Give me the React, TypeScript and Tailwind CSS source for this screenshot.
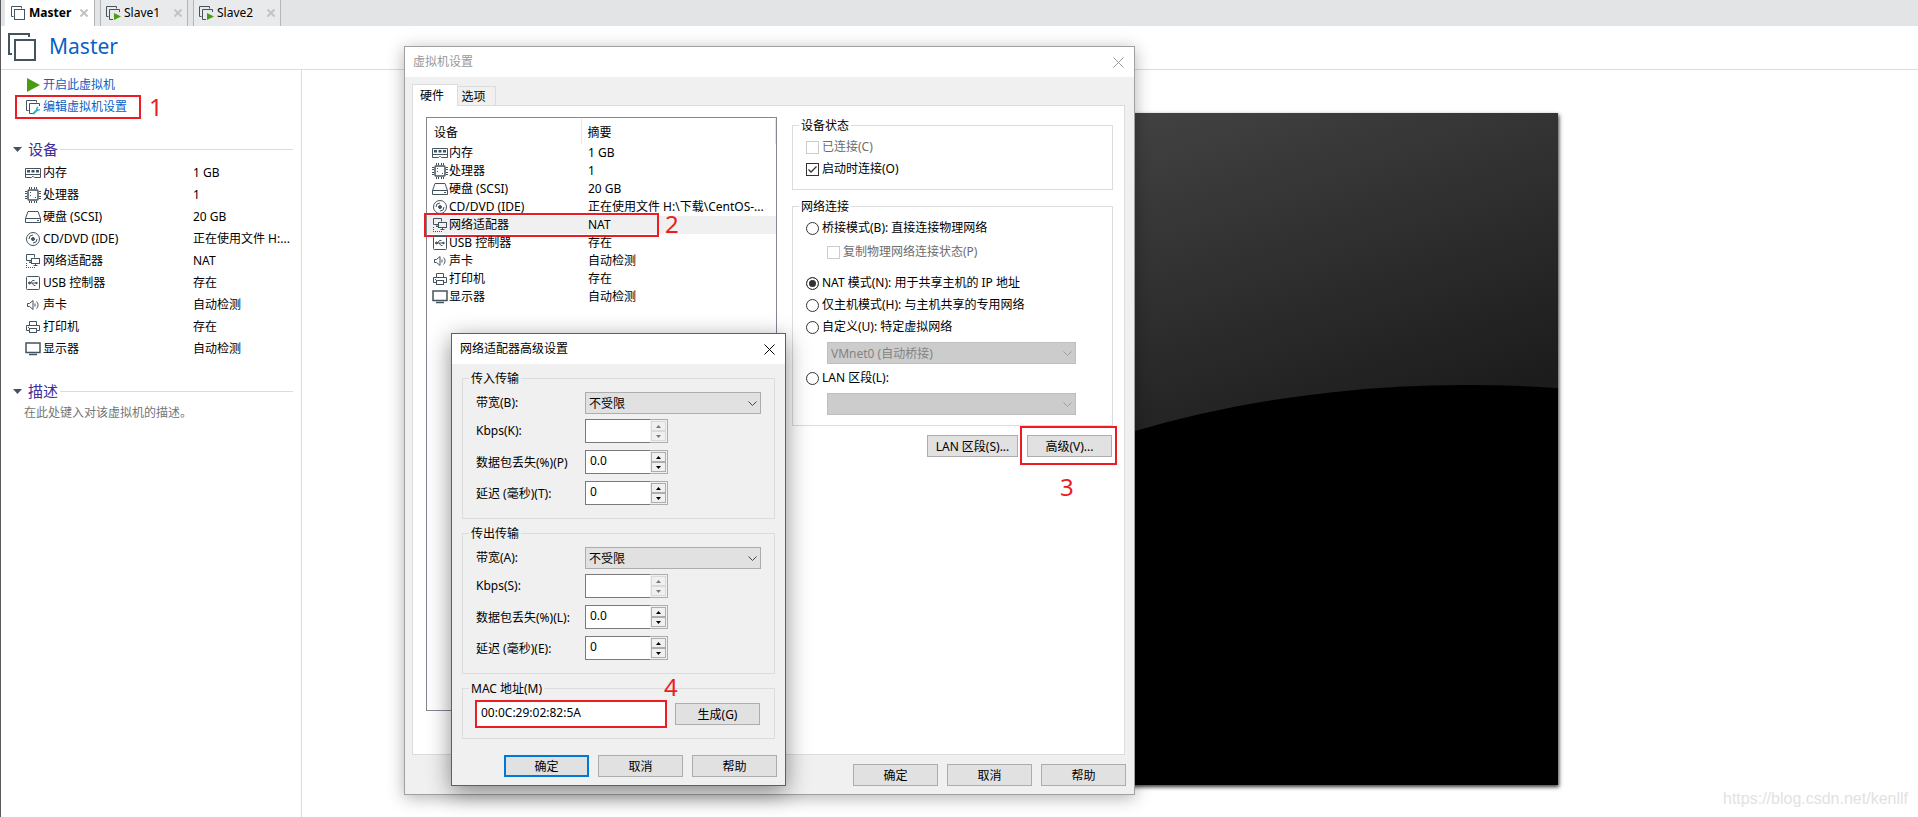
import React, { useState } from 'react';

type IconName = 'memory' | 'cpu' | 'disk' | 'cd' | 'network' | 'usb' | 'sound' | 'printer' | 'display';

interface Device {
  icon: IconName;
  name: string;
  summary: string;
  shortSummary?: string;
}

const devices: Device[] = [
  { icon: 'memory', name: '内存', summary: '1 GB' },
  { icon: 'cpu', name: '处理器', summary: '1' },
  { icon: 'disk', name: '硬盘 (SCSI)', summary: '20 GB' },
  { icon: 'cd', name: 'CD/DVD (IDE)', summary: '正在使用文件 H:\\下载\\CentOS-...', shortSummary: '正在使用文件 H:...' },
  { icon: 'network', name: '网络适配器', summary: 'NAT' },
  { icon: 'usb', name: 'USB 控制器', summary: '存在' },
  { icon: 'sound', name: '声卡', summary: '自动检测' },
  { icon: 'printer', name: '打印机', summary: '存在' },
  { icon: 'display', name: '显示器', summary: '自动检测' },
];

const iconShapes: Record<IconName, React.ReactNode> = {
  memory: (
    <>
      <path d="M.5 3.5h15v9H9.5l-1-1h-1l-1 1h-6z" />
      <path d="M.5 9.5h15" />
      <path d="M2 5h3v2.500H2zM6.500 5h3v2.500h-3zM11 5h3v2.500h-3z" fill="#44545f" stroke="none" />
    </>
  ),
  cpu: (
    <>
      <rect x="3" y="3" width="10" height="10" rx="1" strokeWidth="1.5" />
      <path d="M4.5 0v2M6.5 0v2M9.5 0v2M11.5 0v2M4.5 14v2M6.5 14v2M9.5 14v2M11.5 14v2M0 4.5h2M0 6.5h2M0 9.5h2M0 11.5h2M14 4.5h2M14 6.5h2M14 9.5h2M14 11.5h2" />
      <path d="M5 5.5h1M10 10.5h1M5 8.5h1" />
    </>
  ),
  disk: (
    <>
      <path d="M3 2.5h10l2.5 7H.5z" />
      <path d="M.5 9.5h15v4H.5z" />
      <path d="M12 11.5h2" />
    </>
  ),
  cd: (
    <>
      <circle cx="8" cy="8" r="6.5" />
      <circle cx="8" cy="8" r="1.5" fill="#44545f" />
      <path d="M4 8a4 4 0 0 1 4-4M12 8a4 4 0 0 1-4 4" />
    </>
  ),
  network: (
    <>
      <path d="M6 7.5H1.5v-6h8v3M4 9.5h2M5 7.5v2" />
      <rect x="6.5" y="5.5" width="8" height="5" />
      <path d="M10.5 10.5v2M8.5 12.5h4" />
      <path d="M1.5 10v5M1 14.5h10" strokeDasharray="1 1" />
    </>
  ),
  usb: (
    <>
      <rect x="1.5" y="1.5" width="13" height="13" rx="1" />
      <path d="M4 8h8M5.5 8l2-2.5h2M7 8l2 2.5h1.5" />
      <circle cx="4.5" cy="8" r="1" fill="#44545f" />
      <path d="M11 7l1.5 1-1.5 1z" fill="#44545f" />
    </>
  ),
  sound: (
    <>
      <path d="M2.5 6.5h2l3.5-3v9l-3.5-3h-2z" />
      <path d="M10 6.5v3M11.5 4.5c2 2 2 5 0 7" />
    </>
  ),
  printer: (
    <>
      <path d="M4.5 6V2.5h7V6M4.5 11.5h-3v-5h13v5h-3" />
      <rect x="4.5" y="9.5" width="7" height="4" />
      <path d="M3 8.5h1" />
    </>
  ),
  display: (
    <>
      <path d="M1 2h14v9.5H1z" strokeWidth="1.5" />
      <path d="M4 13.5h8" strokeWidth="1.5" />
    </>
  ),
};

const DeviceIcon = ({ name }: { name: IconName }) => (
  <svg viewBox="0 0 16 16" className="h-4 w-4 shrink-0" fill="none" stroke="#44545f" strokeWidth="1" aria-hidden="true">
    {iconShapes[name]}
  </svg>
);

const VmIcon = ({ badge }: { badge?: 'play' | 'wrench' }) => (
  <svg viewBox="0 0 14 14" className="h-[14px] w-[14px] shrink-0 overflow-visible" fill="none" stroke="#44545f" aria-hidden="true">
    <path d="M2.5 10.5h-2V.5h10v2" />
    {badge ? <path d="M7 13.5H3.5v-10h10V6" /> : <rect x="3.5" y="3.5" width="10" height="10" />}
    {badge === 'play' && <path d="M8 7l7 3.5L8 14z" fill="#4a9c10" stroke="none" />}
    {badge === 'wrench' && (
      <>
        <path d="M7 14l4.5-4.5" stroke="#1cb4d8" strokeWidth="2" />
        <path d="M12.5 6.5c-2 0-3 2-2 3.500s3.500 1 4-1l-2 .5-1-1z" fill="#1cb4d8" stroke="none" />
      </>
    )}
  </svg>
);

const CloseIcon = () => (
  <svg viewBox="0 0 11 11" className="h-[11px] w-[11px]" fill="none" stroke="currentColor" aria-hidden="true">
    <path d="M.5.5l10 10M10.5.5l-10 10" />
  </svg>
);

const VmTab = ({ name, active }: { name: string; active?: boolean }) => (
  <div
    className={
      active
        ? 'flex w-[90px] items-center gap-1 border-r border-[#b4b5b7] bg-white px-1.5 font-bold'
        : 'flex w-[88px] items-center gap-1 border-x border-[#b4b5b7] bg-[#e9eaec] px-[5px]'
    }
  >
    <VmIcon badge={active ? undefined : 'play'} />
    <span>{name}</span>
    <button type="button" aria-label={`关闭 ${name}`} className="ml-auto text-[#c3c3c3]">
      <svg viewBox="0 0 8 8" className="h-2 w-2" stroke="currentColor" strokeWidth="2" aria-hidden="true">
        <path d="M.5.5l7 7M7.5.5l-7 7" />
      </svg>
    </button>
  </div>
);

const SectionHeading = ({ children }: { children: React.ReactNode }) => (
  <div className="mb-0.5 mt-5 flex h-[22px] items-center pl-3 pr-2">
    <svg viewBox="0 0 9 5" className="mr-1.5 h-[5px] w-[9px]" aria-hidden="true">
      <path d="M0 0h9L4.5 5z" fill="#44545f" />
    </svg>
    <h2 className="text-[15px] text-[#41309c]">{children}</h2>
    <span className="ml-0.5 flex-1 border-t border-[#dcdcdc]" />
  </div>
);

const DialogButton = ({ children, primary }: { children: React.ReactNode; primary?: boolean }) => (
  <button
    type="button"
    className={
      primary
        ? 'h-[22px] w-[85px] border-2 border-[#0078d7] bg-[#e1e1e1] pt-0.5 leading-4'
        : 'h-[22px] w-[85px] border border-[#adadad] bg-[#e1e1e1] pt-0.5 leading-4'
    }
  >
    {children}
  </button>
);

const CheckRow = ({ label, checked, disabled }: { label: string; checked?: boolean; disabled?: boolean }) => (
  <label className={disabled ? 'flex h-[22px] items-center gap-[3px] text-[#6d6d6d]' : 'flex h-[22px] items-center gap-[3px]'}>
    <span className="grid">
      <input
        type="checkbox"
        defaultChecked={checked}
        disabled={disabled}
        className="peer col-start-1 row-start-1 h-[13px] w-[13px] appearance-none border border-[#333333] bg-white disabled:border-[#cccccc]"
      />
      <svg
        viewBox="0 0 13 13"
        className="pointer-events-none invisible col-start-1 row-start-1 h-[13px] w-[13px] peer-checked:visible"
        fill="none"
        stroke="#333333"
        strokeWidth="1.3"
        aria-hidden="true"
      >
        <path d="M2.5 6.5L5 9l5.500-5.500" />
      </svg>
    </span>
    {label}
  </label>
);

interface RadioRowProps {
  value: string;
  label: string;
  selected: string;
  onSelect: (value: string) => void;
}

const RadioRow = ({ value, label, selected, onSelect }: RadioRowProps) => (
  <label className="flex h-[22px] items-center gap-[3px]">
    <input
      type="radio"
      name="network-mode"
      value={value}
      checked={selected === value}
      onChange={() => onSelect(value)}
      className="h-[13px] w-[13px] appearance-none rounded-full border border-[#333333] bg-white checked:bg-[#333333] checked:shadow-[inset_0_0_0_2px_#ffffff]"
    />
    {label}
  </label>
);

interface ComboProps {
  id?: string;
  label?: string;
  option: string;
  disabled?: boolean;
  className: string;
}

const Combo = ({ id, label, option, disabled, className }: ComboProps) => (
  <div className={`relative h-[22px] ${className}`}>
    <select
      id={id}
      aria-label={label}
      disabled={disabled}
      className="block h-full w-full appearance-none border border-[#adadad] bg-[#e1e1e1] px-[3px] pt-0.5 leading-4 disabled:border-[#bfbfbf] disabled:bg-[#cccccc] disabled:text-[#838383] disabled:opacity-100"
    >
      <option>{option}</option>
    </select>
    <svg
      viewBox="0 0 9 5"
      className={disabled ? 'pointer-events-none absolute right-1 top-[9px] h-[5px] w-[9px] text-[#9f9f9f]' : 'pointer-events-none absolute right-1 top-[9px] h-[5px] w-[9px] text-[#444444]'}
      fill="none"
      stroke="currentColor"
      aria-hidden="true"
    >
      <path d="M.5.5l4 4 4-4" />
    </svg>
  </div>
);

const Spinner = ({ id, value, disabled }: { id: string; value: string; disabled?: boolean }) => {
  const buttonClass = disabled
    ? 'flex flex-1 items-center justify-center border border-[#dadada] text-[#777777]'
    : 'flex flex-1 items-center justify-center border border-[#adadad] text-black';

  return (
    <div className="flex h-6 w-[83px]">
      <input
        id={id}
        type="text"
        defaultValue={value}
        disabled={disabled}
        className="w-[65px] border border-r-0 border-[#7a7a7a] bg-white pb-0.5 pl-1 leading-4"
      />
      <div className="flex flex-1 flex-col border border-l-0 border-[#adadad] bg-[#f0f0f0] p-px">
        <button type="button" aria-label="增加" disabled={disabled} className={buttonClass}>
          <svg viewBox="0 0 5 3" className="h-[3px] w-[5px]" fill="currentColor" aria-hidden="true">
            <path d="M0 3h5L2.5 0z" />
          </svg>
        </button>
        <button type="button" aria-label="减少" disabled={disabled} className={buttonClass}>
          <svg viewBox="0 0 5 3" className="h-[3px] w-[5px]" fill="currentColor" aria-hidden="true">
            <path d="M0 0h5L2.5 3z" />
          </svg>
        </button>
      </div>
    </div>
  );
};

const GroupLegend = ({ children }: { children: React.ReactNode }) => (
  <legend className="-ml-[7px] h-4 px-0.5 leading-[18px]">{children}</legend>
);

interface TransferGroupProps {
  id: string;
  title: string;
  labels: [string, string, string, string];
}

const TransferGroup = ({ id, title, labels }: TransferGroupProps) => (
  <fieldset className="border border-[#dcdcdc] pb-[13px] pl-[13px]">
    <GroupLegend>{title}</GroupLegend>
    <div className="flex items-center pt-1.5">
      <label htmlFor={`${id}-bandwidth`} className="w-[109px]">{labels[0]}</label>
      <Combo id={`${id}-bandwidth`} option="不受限" className="w-[176px]" />
    </div>
    <div className="flex items-center pt-[5px]">
      <label htmlFor={`${id}-kbps`} className="w-[109px]">{labels[1]}</label>
      <Spinner id={`${id}-kbps`} value="" disabled />
    </div>
    <div className="flex items-center pt-[7px]">
      <label htmlFor={`${id}-loss`} className="w-[109px] whitespace-nowrap pt-0.5">{labels[2]}</label>
      <Spinner id={`${id}-loss`} value="0.0" />
    </div>
    <div className="flex items-center pt-[7px]">
      <label htmlFor={`${id}-delay`} className="w-[109px] pt-0.5">{labels[3]}</label>
      <Spinner id={`${id}-delay`} value="0" />
    </div>
  </fieldset>
);

const HardwareList = () => (
  <div className="w-[351px] border border-[#828790] bg-white pt-px">
    <table className="w-full table-fixed border-collapse">
      <thead>
        <tr className="h-[25px] text-left">
          <th className="w-[154px] border-r border-[#e5e5e5] pl-[7px] pt-0.5 font-normal">设备</th>
          <th className="border-r border-[#e5e5e5] pl-1.5 pt-0.5 font-normal">摘要</th>
        </tr>
      </thead>
      <tbody>
        {devices.map((device) => {
          const selected = device.icon === 'network';
          return (
            <tr key={device.icon} className={selected ? 'h-[18px] bg-[#f0f0f0]' : 'h-[18px]'}>
              <td className="p-0 pl-[5px]">
                <div className="relative flex h-[18px] items-center gap-px">
                  <DeviceIcon name={device.icon} />
                  <span>{device.name}</span>
                  {selected && (
                    <>
                      <span className="absolute -left-2 -top-[3px] h-6 w-[235px] border-2 border-[#ed1c24]" />
                      <span className="absolute left-[233px] -top-1 text-2xl leading-6 text-[#ed1c24]">2</span>
                    </>
                  )}
                </div>
              </td>
              <td className="whitespace-nowrap p-0 pl-[7px] leading-[18px]">{device.summary}</td>
            </tr>
          );
        })}
      </tbody>
    </table>
  </div>
);

const SettingsDialog = () => {
  const [mode, setMode] = useState('nat');

  return (
    <section
      aria-label="虚拟机设置"
      className="absolute left-[403px] top-[46px] flex h-[749px] w-[731px] flex-col border border-[#a0a0a0] bg-[#f0f0f0] shadow-[0_3px_16px_rgba(0,0,0,0.3)]"
    >
      <div className="flex h-[30px] shrink-0 items-center justify-between bg-white pl-2 pr-2.5 text-[#999999]">
        <h2>虚拟机设置</h2>
        <button type="button" aria-label="关闭">
          <CloseIcon />
        </button>
      </div>
      <div className="flex flex-1 flex-col pl-[7px] pr-[9px] pt-[7px]">
        <div role="tablist" className="z-10 -mb-px flex items-end">
          <button type="button" role="tab" aria-selected="true" className="h-[22px] w-[46px] border border-b-0 border-[#dcdcdc] bg-white pr-1.5 leading-4">
            硬件
          </button>
          <button type="button" role="tab" aria-selected="false" className="h-5 w-[38px] border border-l-0 border-[#dcdcdc] bg-[#f0f0f0] pr-1.5 pt-0.5 leading-4">
            选项
          </button>
        </div>
        <div className="flex flex-1 gap-[15px] border border-[#dcdcdc] bg-white pb-[43px] pl-[13px] pr-[11px] pt-[11px]">
          <HardwareList />
          <div className="flex flex-1 flex-col gap-2">
            <fieldset className="border border-[#dcdcdc] pb-[9px] pl-[13px] pt-[3px]">
              <GroupLegend>设备状态</GroupLegend>
              <CheckRow label="已连接(C)" disabled />
              <CheckRow label="启动时连接(O)" checked />
            </fieldset>
            <fieldset className="border border-[#dcdcdc] pb-2.5 pl-[13px] pt-[3px]">
              <GroupLegend>网络连接</GroupLegend>
              <RadioRow value="bridged" label="桥接模式(B): 直接连接物理网络" selected={mode} onSelect={setMode} />
              <div className="mb-[9px] ml-[21px] mt-0.5">
                <CheckRow label="复制物理网络连接状态(P)" disabled />
              </div>
              <RadioRow value="nat" label="NAT 模式(N): 用于共享主机的 IP 地址" selected={mode} onSelect={setMode} />
              <RadioRow value="host" label="仅主机模式(H): 与主机共享的专用网络" selected={mode} onSelect={setMode} />
              <RadioRow value="custom" label="自定义(U): 特定虚拟网络" selected={mode} onSelect={setMode} />
              <Combo label="虚拟网络" option="VMnet0 (自动桥接)" disabled className="mb-[3px] ml-[21px] mt-1 w-[249px]" />
              <RadioRow value="lan" label="LAN 区段(L):" selected={mode} onSelect={setMode} />
              <Combo label="LAN 区段" option="" disabled className="ml-[21px] mt-1 w-[249px]" />
            </fieldset>
            <div className="flex justify-end gap-[9px] pr-px pt-px">
              <button type="button" className="h-[22px] w-[91px] whitespace-nowrap border border-[#adadad] bg-[#e1e1e1] pt-0.5 leading-4">
                LAN 区段(S)...
              </button>
              <div className="relative">
                <DialogButton>高级(V)...</DialogButton>
                <span className="pointer-events-none absolute -left-[7px] -top-[9px] h-[39px] w-[97px] border-2 border-[#ed1c24]" />
                <span className="absolute left-[33px] top-10 text-2xl leading-6 text-[#ed1c24]">3</span>
              </div>
            </div>
          </div>
        </div>
      </div>
      <div className="flex shrink-0 justify-end gap-[9px] pb-2 pr-2 pt-[9px]">
        <DialogButton>确定</DialogButton>
        <DialogButton>取消</DialogButton>
        <DialogButton>帮助</DialogButton>
      </div>
    </section>
  );
};

const AdvancedDialog = () => (
  <section
    aria-label="网络适配器高级设置"
    className="absolute left-[450px] top-[333px] z-20 w-[335px] border border-[#5f5f5f] bg-[#f0f0f0] shadow-[0_6px_22px_rgba(0,0,0,0.45)]"
  >
    <div className="flex h-[30px] items-center justify-between bg-white pl-2 pr-2.5">
      <h2>网络适配器高级设置</h2>
      <button type="button" aria-label="关闭">
        <CloseIcon />
      </button>
    </div>
    <div className="flex flex-col gap-1.5 px-2.5 pt-1.5">
      <TransferGroup id="in" title="传入传输" labels={['带宽(B):', 'Kbps(K):', '数据包丢失(%)(P)', '延迟 (毫秒)(T):']} />
      <TransferGroup id="out" title="传出传输" labels={['带宽(A):', 'Kbps(S):', '数据包丢失(%)(L):', '延迟 (毫秒)(E):']} />
      <fieldset className="border border-[#dcdcdc] pb-[11px] pl-[13px]">
        <GroupLegend>MAC 地址(M)</GroupLegend>
        <div className="flex items-center gap-[9px] pt-[5px]">
          <div className="relative">
            <input
              type="text"
              aria-label="MAC 地址"
              defaultValue="00:0C:29:02:82:5A"
              className="block h-[26px] w-[190px] border border-[#7a7a7a] bg-white pb-1 pl-1 leading-4"
            />
            <span className="pointer-events-none absolute -inset-px border-2 border-[#ed1c24]" />
            <span className="absolute -top-[26px] left-[188px] text-2xl leading-6 text-[#ed1c24]">4</span>
          </div>
          <DialogButton>生成(G)</DialogButton>
        </div>
      </fieldset>
    </div>
    <div className="flex justify-end gap-[9px] pb-2 pr-2 pt-4">
      <DialogButton primary>确定</DialogButton>
      <DialogButton>取消</DialogButton>
      <DialogButton>帮助</DialogButton>
    </div>
  </section>
);

const Sidebar = () => (
  <aside className="w-[301px] shrink-0 border-r border-[#dcdcdc] pt-1">
    <nav className="pl-[25px] text-[#0a5fc4]">
      <a href="#power-on" className="flex h-[22px] items-center gap-[3px]">
        <svg viewBox="0 0 14 14" className="h-[14px] w-[14px]" aria-hidden="true">
          <path d="M1 0l13 7-13 7z" fill="#4a9c10" />
        </svg>
        开启此虚拟机
      </a>
      <div className="relative">
        <a href="#settings" className="flex h-[22px] items-center gap-[3px]">
          <VmIcon badge="wrench" />
          编辑虚拟机设置
        </a>
        <span className="pointer-events-none absolute -left-[11px] -top-px h-6 w-[126px] border-2 border-[#ed1c24]" />
        <span className="absolute -top-px left-[123px] text-2xl leading-6 text-[#ed1c24]">1</span>
      </div>
    </nav>

    <SectionHeading>设备</SectionHeading>
    <table className="ml-6 table-fixed border-collapse">
      <tbody>
        {devices.map((device) => (
          <tr key={device.icon} className="h-[22px]">
            <td className="w-[168px] p-0">
              <div className="flex items-center gap-0.5">
                <DeviceIcon name={device.icon} />
                <span>{device.name}</span>
              </div>
            </td>
            <td className="whitespace-nowrap p-0">{device.shortSummary ?? device.summary}</td>
          </tr>
        ))}
      </tbody>
    </table>

    <SectionHeading>描述</SectionHeading>
    <p className="pl-[23px] leading-[18px] text-[#757575]">在此处键入对该虚拟机的描述。</p>
  </aside>
);

const ScreenPreview = () => (
  <svg viewBox="0 0 896 672" className="w-full max-w-[896px] shadow-[1px_2px_4px_rgba(0,0,0,0.8)]" aria-hidden="true">
    <defs>
      <linearGradient id="screen" gradientUnits="userSpaceOnUse" x1="473" y1="0" x2="600" y2="364">
        <stop offset="0" stopColor="#424242" />
        <stop offset="1" stopColor="#1c1c1c" />
      </linearGradient>
    </defs>
    <rect width="896" height="672" fill="url(#screen)" />
    <ellipse cx="805" cy="657" rx="700" ry="385" fill="#000000" />
    <rect y="655" width="896" height="17" fill="#000000" />
  </svg>
);

const App: React.FC = () => {
  return (
    <div className="relative flex min-h-screen flex-col overflow-hidden border-l border-[#5a5a5a] bg-white font-['Noto_Sans','Noto_Sans_CJK_SC',sans-serif] text-xs text-black">
      {/* VM tabs */}
      <div className="flex h-[26px] gap-[5px] bg-[#e3e4e6] pl-1">
        <VmTab name="Master" active />
        <VmTab name="Slave1" />
        <VmTab name="Slave2" />
      </div>

      {/* Title */}
      <header className="flex h-11 items-center gap-[13px] border-b border-[#dcdcdc] pl-[7px]">
        <svg viewBox="0 0 28 28" className="mb-0.5 h-7 w-7" fill="none" stroke="#44545f" strokeWidth="2" aria-hidden="true">
          <path d="M4 21H1V1h20v3" />
          <rect x="7" y="7" width="20" height="20" />
        </svg>
        <h1 className="pb-1 text-[21px] leading-8 text-[#0a5fc4]">Master</h1>
      </header>

      <div className="flex flex-1">
        <Sidebar />
        <main className="flex flex-1 items-start justify-center pt-[43px]">
          <ScreenPreview />
        </main>
      </div>

      <SettingsDialog />
      <AdvancedDialog />

      <footer className="absolute bottom-1.5 right-2.5 font-['Liberation_Sans',sans-serif] text-base text-[#e2e2e2]">
        https://blog.csdn.net/kenllf
      </footer>
    </div>
  );
};

export default App;
